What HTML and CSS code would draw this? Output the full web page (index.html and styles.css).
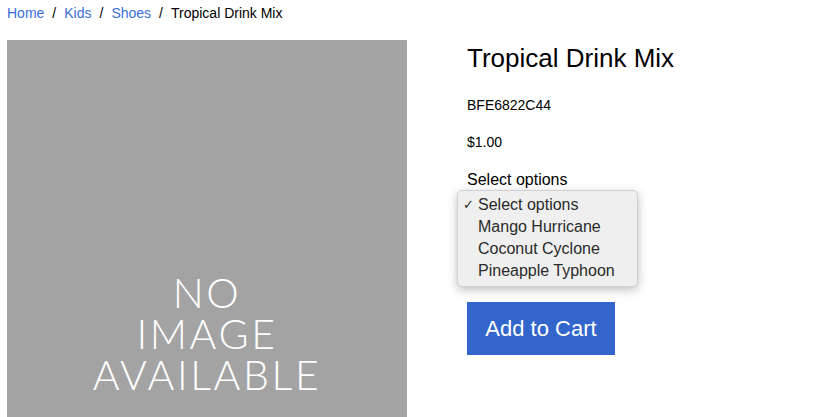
FILE: index.html
```html
<!DOCTYPE html>
<html>
<head>
<meta charset="utf-8">
<link rel="stylesheet" href="styles.css">
</head>
<body>
<nav class="crumbs">
  <a href="#">Home</a><span class="sep">/</span><a href="#">Kids</a><span class="sep">/</span><a href="#">Shoes</a><span class="sep">/</span><span class="current">Tropical Drink Mix</span>
</nav>
<main class="product">
  <div class="photo">
    <div class="noimg">
      <span class="line">NO</span>
      <span class="line">IMAGE</span>
      <span class="line">AVAILABLE</span>
    </div>
  </div>
  <section class="details">
    <h1 class="title">Tropical Drink Mix</h1>
    <p class="sku">BFE6822C44</p>
    <p class="price">$1.00</p>
    <label class="opt-label">Select options</label>
    <div class="select-wrap">
      <div class="select-box">Select options</div>
      <ul class="popup">
        <li class="opt checked"><span class="check">✓</span>Select options</li>
        <li class="opt">Mango Hurricane</li>
        <li class="opt">Coconut Cyclone</li>
        <li class="opt">Pineapple Typhoon</li>
      </ul>
    </div>
    <button class="cart">Add to Cart</button>
  </section>
</main>
</body>
</html>
```
FILE: styles.css
```css
html, body {
  margin: 0;
  padding: 0;
  background: #fff;
}
body {
  padding: 0 7px;
  font-family: "Liberation Sans", Arial, sans-serif;
  color: #000;
}
.crumbs {
  height: 40px;
  font-size: 14px;
  line-height: 16px;
  padding-top: 5px;
  box-sizing: border-box;
}
.crumbs a {
  color: #3a6fd8;
  text-decoration: none;
}
.crumbs .sep {
  margin: 0 8px;
}
.product {
  display: flex;
  align-items: flex-start;
}
.photo {
  width: 400px;
  height: 400px;
  flex: none;
  background: #a3a3a3;
  display: flex;
  justify-content: center;
  align-items: flex-end;
}
.noimg {
  font-family: Lato, "Noto Sans", sans-serif;
  font-weight: 300;
  color: #fff;
  font-size: 41px;
  text-align: center;
  letter-spacing: 2.6px;
  padding-bottom: 45px;
}
.noimg .line {
  display: block;
  height: 41px;
  line-height: 41px;
}
.details {
  margin-left: 60px;
  flex: 1;
}
.title {
  font-size: 26px;
  font-weight: normal;
  margin: 3px 0 0;
  line-height: 30px;
}
.sku {
  font-size: 14px;
  margin: 24px 0 0;
  line-height: 16px;
}
.price {
  font-size: 14px;
  margin: 21px 0 0;
  line-height: 16px;
}
.opt-label {
  display: block;
  font-size: 16px;
  margin-top: 21px;
  line-height: 18px;
}
.select-wrap {
  position: relative;
  height: 100px;
}
.select-box {
  font-size: 15px;
  padding: 4px 8px;
  width: 160px;
  visibility: hidden;
}
.popup {
  position: absolute;
  left: -10px;
  top: 1px;
  width: 181px;
  margin: 0;
  padding: 3px 0 4px;
  list-style: none;
  background: #efefef;
  border: 1px solid #d0d0d0;
  border-radius: 5px;
  box-shadow: 0 3px 10px rgba(0,0,0,0.25);
  box-sizing: border-box;
}
.opt {
  position: relative;
  font-size: 16px;
  line-height: 22px;
  padding-left: 20px;
  color: #2a2a2a;
  font-family: "Liberation Sans", Arial, sans-serif;
  white-space: nowrap;
}
.check {
  position: absolute;
  left: 5px;
  font-size: 13px;
}
.cart {
  display: block;
  margin-top: 13px;
  width: 148px;
  height: 53px;
  background: #3366cc;
  color: #fff;
  border: none;
  font-family: "Liberation Sans", Arial, sans-serif;
  font-size: 22px;
  padding: 0;
}
```
